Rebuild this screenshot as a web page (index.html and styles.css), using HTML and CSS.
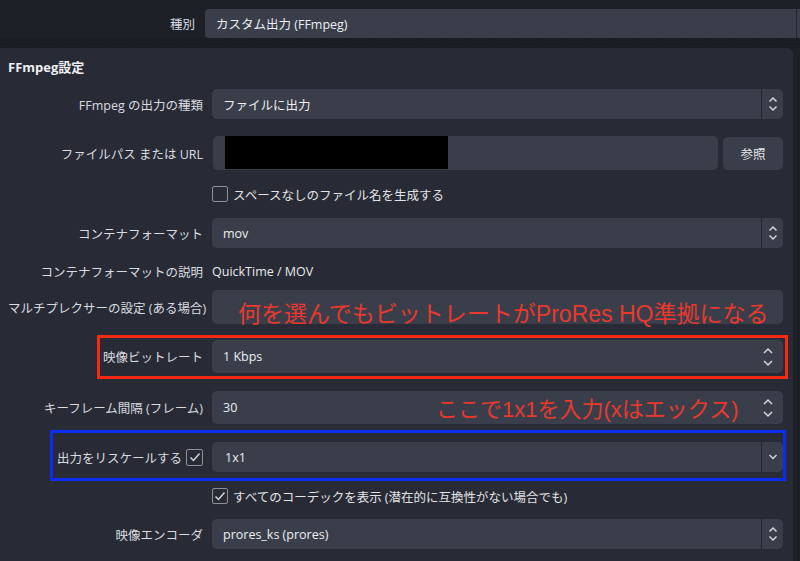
FILE: index.html
```html
<!DOCTYPE html>
<html lang="ja">
<head>
  <meta charset="UTF-8" />
  <title>出力設定 | FFmpeg</title>
  <link rel="stylesheet" href="styles.css">
</head>
<body>
  <div class="topbar">
    <div class="label">種別</div>
    <div class="field top-field">
      <span>カスタム出力 (FFmpeg)</span>
      <span class="top-edge"></span>
    </div>
  </div>
  <div class="band"></div>

  <div class="panel">
    <div class="panel-title">FFmpeg設定</div>

    <div class="form">
      <div class="row">
        <div class="label">FFmpeg の出力の種類</div>
        <div class="field combo">
          <span>ファイルに出力</span>
          <span class="combo-btn">
            <svg width="10" height="16" viewBox="0 0 10 16"><path d="M1.5 5.5 5 2 8.5 5.5M1.5 10.5 5 14 8.5 10.5" /></svg>
          </span>
        </div>
      </div>

      <div class="row row-edit gap-17">
        <div class="label">ファイルパス または URL</div>
        <div class="path-line">
          <div class="field edit"><span class="redact"></span></div>
          <div class="button">参照</div>
        </div>
      </div>

      <div class="row row-check">
        <div></div>
        <label class="check"><span class="box"></span>スペースなしのファイル名を生成する</label>
      </div>

      <div class="row">
        <div class="label">コンテナフォーマット</div>
        <div class="field combo">
          <span>mov</span>
          <span class="combo-btn">
            <svg width="10" height="16" viewBox="0 0 10 16"><path d="M1.5 5.5 5 2 8.5 5.5M1.5 10.5 5 14 8.5 10.5" /></svg>
          </span>
        </div>
      </div>

      <div class="row row-text">
        <div class="label">コンテナフォーマットの説明</div>
        <div class="value">QuickTime / MOV</div>
      </div>

      <div class="row row-edit gap-10">
        <div class="label">マルチプレクサーの設定 (ある場合)</div>
        <div class="field edit"></div>
      </div>

      <div class="row row-spin gap-16">
        <div class="label">映像ビットレート</div>
        <div class="field spin">
          <span>1 Kbps</span>
          <svg class="spin-arrows" width="12" height="22" viewBox="0 0 12 22"><path d="M2 7 6 3 10 7M2 15 6 19 10 15" /></svg>
        </div>
      </div>

      <div class="row row-spin gap-18">
        <div class="label">キーフレーム間隔 (フレーム)</div>
        <div class="field spin">
          <span>30</span>
          <svg class="spin-arrows" width="12" height="22" viewBox="0 0 12 22"><path d="M2 7 6 3 10 7M2 15 6 19 10 15" /></svg>
        </div>
      </div>

      <div class="row gap-18">
        <div class="label rescale">出力をリスケールする<span class="box checked"><svg width="14" height="14" viewBox="0 0 14 14"><path d="M2.5 7.5 5.5 10.5 11.5 3.5" /></svg></span></div>
        <div class="field combo">
          <span class="value-pad">1x1</span>
          <span class="combo-btn">
            <svg width="10" height="10" viewBox="0 0 10 10"><path d="M1.5 3 5 6.5 8.5 3" /></svg>
          </span>
        </div>
      </div>

      <div class="row row-check">
        <div></div>
        <label class="check"><span class="box checked"><svg width="14" height="14" viewBox="0 0 14 14"><path d="M2.5 7.5 5.5 10.5 11.5 3.5" /></svg></span>すべてのコーデックを表示 (潜在的に互換性がない場合でも)</label>
      </div>

      <div class="row gap-13">
        <div class="label">映像エンコーダ</div>
        <div class="field combo">
          <span>prores_ks (prores)</span>
          <span class="combo-btn">
            <svg width="10" height="16" viewBox="0 0 10 16"><path d="M1.5 5.5 5 2 8.5 5.5M1.5 10.5 5 14 8.5 10.5" /></svg>
          </span>
        </div>
      </div>
    </div>
  </div>

  <!-- annotations drawn over the screenshot -->
  <div class="note note-bitrate">何を選んでもビットレートがProRes HQ準拠になる</div>
  <div class="note note-scale">ここで1x1を入力(xはエックス)</div>
  <div class="mark mark-red"></div>
  <div class="mark mark-blue"></div>
</body>
</html>
```

FILE: styles.css
```css
* {
  box-sizing: border-box;
}

body {
  margin: 0;
  height: 561px;
  overflow: hidden;
  background: #1e2028;
  color: #dcdde1;
  font-family: 'Open Sans', 'Noto Sans CJK JP', sans-serif;
  font-size: 12.5px;
  position: relative;
}

.topbar {
  display: grid;
  grid-template-columns: 187px 1fr;
  column-gap: 10px;
  padding: 9px 0 0 8px;
  height: 38px;
  align-items: center;
}

.topbar .field {
  height: 29px;
  border-radius: 4px 0 0 4px;
  padding-right: 0;
}

.top-field > span:first-child {
  flex: 1;
}

.top-edge {
  width: 4px;
  height: 100%;
  border-left: 1px solid #23262e;
}

.band {
  height: 10px;
  background: #1a1c23;
  background-image: radial-gradient(#20232a 1px, transparent 1px);
  background-size: 3px 3px;
}

.panel {
  width: 793px;
  height: 513px;
  background: #282b35;
  border-radius: 0 6px 0 0;
  padding: 10px 10px 0 8px;
}

.panel-title {
  font-weight: 700;
  font-size: 13px;
  color: #eeeff2;
  line-height: 18px;
}

.form {
  display: flex;
  flex-direction: column;
  gap: 14px;
  margin-top: 13px;
}

.row {
  display: grid;
  grid-template-columns: 195px 1fr;
  column-gap: 9px;
  align-items: center;
  height: 30px;
}

.row-edit { height: 34px; }
.row-spin { height: 33px; }
.row-check { height: 20px; }
.row-text { height: 18px; }

.gap-17 { margin-top: 3px; }
.gap-10 { margin-top: -4px; }
.gap-16 { margin-top: 2px; }
.gap-18 { margin-top: 4px; }
.gap-13 { margin-top: -1px; }

.label {
  text-align: right;
  white-space: nowrap;
  color: #dadbe0;
}

.field {
  height: 100%;
  background: #3a3e4b;
  border-radius: 5px;
  display: flex;
  align-items: center;
  padding-left: 11px;
  color: #eceef1;
  position: relative;
}

.combo {
  padding-right: 0;
}

.combo > span:first-child {
  flex: 1;
}

.combo-btn {
  width: 22px;
  height: 100%;
  border-left: 1px solid #22252d;
  display: flex;
  align-items: center;
  justify-content: center;
}

.combo-btn path,
.spin-arrows path,
.box path {
  fill: none;
  stroke: #d4d6db;
  stroke-width: 1.5;
}

.spin {
  justify-content: space-between;
  padding-right: 9px;
}

.edit {
  padding-left: 12px;
}

.path-line {
  display: flex;
  gap: 5px;
  height: 100%;
}

.path-line .field {
  flex: 1;
  margin-left: 1px;
}

.redact {
  width: 223px;
  height: 33px;
  background: #000;
  margin-top: -1px;
}

.button {
  width: 60px;
  height: 33px;
  margin-top: 1px;
  background: #3a3e4b;
  border-radius: 5px;
  display: flex;
  align-items: center;
  justify-content: center;
  color: #e4e5e8;
}

.check {
  display: flex;
  align-items: center;
  gap: 5px;
  color: #e2e3e6;
}

.box {
  width: 16px;
  height: 16px;
  border: 1.5px solid #8d9097;
  border-radius: 2px;
  display: inline-flex;
  align-items: center;
  justify-content: center;
  flex: none;
}

.rescale {
  display: flex;
  justify-content: flex-end;
  align-items: center;
  gap: 4px;
}

.rescale .box {
  width: 17px;
  height: 17px;
}

.value {
  color: #e8e9ec;
}

.value-pad {
  padding-left: 2px;
}

.note {
  position: absolute;
  color: #e8392c;
  font-family: 'Liberation Sans', 'Noto Sans CJK JP', sans-serif;
  white-space: nowrap;
  line-height: 1;
}

.note-bitrate {
  left: 238px;
  top: 303px;
  font-size: 23px;
}

.note-scale {
  left: 436px;
  top: 399px;
  font-size: 22px;
}

.mark {
  position: absolute;
  border: 3px solid;
}

.mark-red {
  left: 97px;
  top: 335px;
  width: 691px;
  height: 44px;
  border-color: #f52a14;
}

.mark-blue {
  left: 50px;
  top: 430px;
  width: 736px;
  height: 51px;
  border-color: #0c2cf2;
}
```
